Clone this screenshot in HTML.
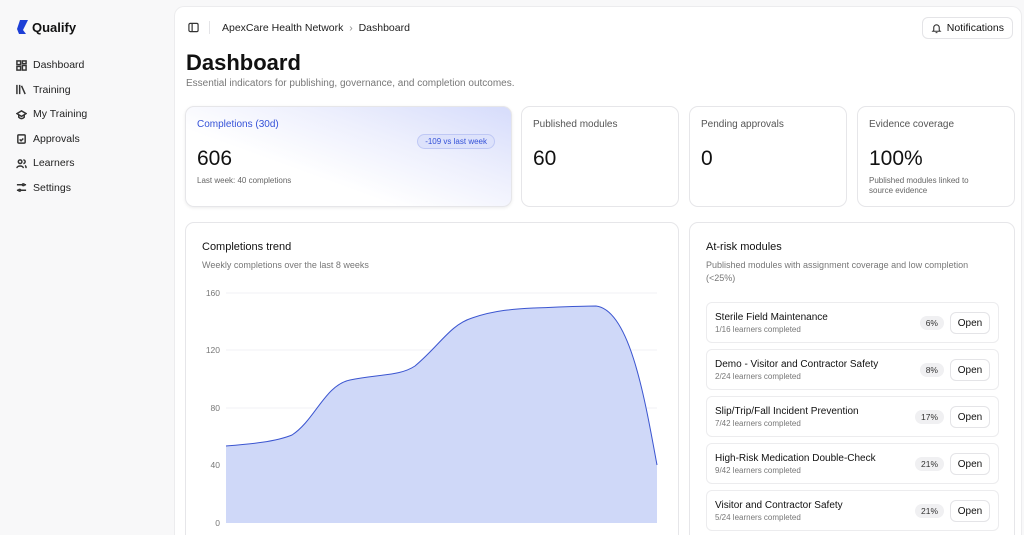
<!DOCTYPE html>
<html style="width:1024px;height:535px;overflow:hidden"><head><meta charset="utf-8"><style>
*{box-sizing:border-box;margin:0;padding:0}
body{width:1024px;height:535px;overflow:hidden;background:#f8f8f9;font-family:"Liberation Sans",sans-serif;color:#111;position:relative}
.side{position:absolute;left:0;top:0;width:174px;height:535px}
.logo{position:absolute;left:16px;top:19px;display:flex;align-items:center;font-weight:bold;font-size:13px}
.nav{position:absolute;left:16px;top:53px}
.nav div{height:24.5px;display:flex;align-items:center;font-size:10.5px;color:#222}
.nav svg{width:11px;height:11px;margin-right:6px;stroke:#333;fill:none;stroke-width:1.6}
.main{position:absolute;left:174px;top:6px;width:848px;height:529px;background:#fff;border:1px solid #ececee;border-bottom:none;border-radius:10px 10px 0 0;overflow:hidden}
.crumb{position:absolute;left:47px;top:15px;font-size:10.5px;color:#222}
.notif{position:absolute;right:8px;top:10px;height:22px;padding:0 8px;border:1px solid #e4e4e7;border-radius:6px;font-size:10.5px;display:flex;align-items:center;gap:5px}
h1{position:absolute;left:11px;top:43px;font-size:22px;font-weight:bold}
.sub{position:absolute;left:11px;top:71px;font-size:10px;color:#777}
.card{position:absolute;top:99px;height:101px;border:1px solid #e6e6e9;border-radius:9px;background:#fff;padding:12px 11px}
.card .t{font-size:10px;color:#555}
.card .v{font-size:21px;margin-top:17px}
.card .s{font-size:8px;color:#666;margin-top:5px;line-height:10px}
.box{position:absolute;top:215px;border:1px solid #e6e6e9;border-radius:9px;background:#fff;height:340px}
.row{position:absolute;left:16px;width:293px;height:41px;border:1px solid #ececee;border-radius:6px}
.row .n{position:absolute;left:8px;top:9px;font-size:10px}
.row .c{position:absolute;left:8px;top:22px;font-size:8px;color:#777}
.row .p{position:absolute;right:54px;top:13px;background:#f0f0f2;border-radius:8px;font-size:8.5px;padding:2px 6px;color:#333}
.row .o{position:absolute;right:8px;top:9px;width:40px;height:22px;border:1px solid #e4e4e7;border-radius:6px;font-size:10px;display:flex;align-items:center;justify-content:center}
</style></head><body>
<div class="side">
<div class="logo"><svg width="14" height="16" viewBox="0 0 14 16"><path d="M4 1 L12 1 L7 11 L10 15 L3 15 L1 10 Z" fill="#1d3fd6"/></svg><span style="margin-left:2px">Qualify</span></div>
<div class="nav">
<div><svg viewBox="0 0 12 12"><rect x="1" y="1" width="4" height="4"/><rect x="7" y="1" width="4" height="3"/><rect x="1" y="7" width="4" height="4"/><rect x="7" y="6" width="4" height="5"/></svg>Dashboard</div>
<div><svg viewBox="0 0 12 12"><path d="M1 1v10M4 1v10M6 2l4 9"/></svg>Training</div>
<div><svg viewBox="0 0 12 12"><path d="M1 5l5-3 5 3-5 3zM3 6v3c2 2 4 2 6 0V6"/></svg>My Training</div>
<div><svg viewBox="0 0 12 12"><rect x="2" y="2" width="8" height="9" rx="1"/><path d="M4 7l1.5 1.5L8 6"/></svg>Approvals</div>
<div><svg viewBox="0 0 12 12"><circle cx="4.5" cy="4" r="2"/><path d="M1 11c0-3 7-3 7 0M8 2a2 2 0 010 4M10 8c1 1 1 2 1 3"/></svg>Learners</div>
<div><svg viewBox="0 0 12 12"><path d="M1 3h6M9 3h2M1 9h2M5 9h6"/><circle cx="8" cy="3" r="1"/><circle cx="4" cy="9" r="1"/></svg>Settings</div>
</div></div>
<div class="main">
<svg style="position:absolute;left:13px;top:15px" width="11" height="11" viewBox="0 0 12 12" fill="none" stroke="#333" stroke-width="1.3"><rect x="1" y="1.5" width="10" height="9" rx="1.5"/><path d="M4.5 1.5v9"/></svg>
<div style="position:absolute;left:34px;top:14px;width:1px;height:13px;background:#e4e4e7"></div>
<div class="crumb">ApexCare Health Network &nbsp;<span style="color:#888">›</span>&nbsp; Dashboard</div>
<div class="notif"><svg width="11" height="11" viewBox="0 0 12 12" fill="none" stroke="#333" stroke-width="1.2"><path d="M3 8V5a3 3 0 016 0v3l1 1H2zM5 10.5h2"/></svg>Notifications</div>
<h1>Dashboard</h1>
<div class="sub">Essential indicators for publishing, governance, and completion outcomes.</div>
<div class="card" style="left:10px;width:327px;background:linear-gradient(200deg,#d6dcfb 0%,#eef0fd 35%,#fff 65%);box-shadow:0 1px 3px rgba(0,0,0,.08)"><div class="t" style="color:#3552d8">Completions (30d)</div><div style="position:absolute;right:16px;top:27px;background:#dde2fb;border:1px solid #bfc8f5;color:#3552d8;border-radius:8px;font-size:8px;padding:2px 7px">-109 vs last week</div><div class="v">606</div><div class="s">Last week: 40 completions</div></div>
<div class="card" style="left:346px;width:158px"><div class="t">Published modules</div><div class="v">60</div></div>
<div class="card" style="left:514px;width:158px"><div class="t">Pending approvals</div><div class="v">0</div></div>
<div class="card" style="left:682px;width:158px"><div class="t">Evidence coverage</div><div class="v">100%</div><div class="s">Published modules linked to<br>source evidence</div></div>
<div class="box" style="left:10px;width:494px">
<div style="position:absolute;left:16px;top:18px;font-size:11px">Completions trend</div>
<div style="position:absolute;left:16px;top:37px;font-size:9px;color:#777">Weekly completions over the last 8 weeks</div>
</div>
<div class="box" style="left:514px;width:326px">
<div style="position:absolute;left:16px;top:18px;font-size:11px">At-risk modules</div>
<div style="position:absolute;left:16px;top:36px;font-size:9px;color:#777;line-height:13px;width:290px">Published modules with assignment coverage and low completion (&lt;25%)</div>
<div class="row" style="top:79px"><div class="n">Sterile Field Maintenance</div><div class="c">1/16 learners completed</div><div class="p">6%</div><div class="o">Open</div></div>
<div class="row" style="top:126px"><div class="n">Demo - Visitor and Contractor Safety</div><div class="c">2/24 learners completed</div><div class="p">8%</div><div class="o">Open</div></div>
<div class="row" style="top:173px"><div class="n">Slip/Trip/Fall Incident Prevention</div><div class="c">7/42 learners completed</div><div class="p">17%</div><div class="o">Open</div></div>
<div class="row" style="top:220px"><div class="n">High-Risk Medication Double-Check</div><div class="c">9/42 learners completed</div><div class="p">21%</div><div class="o">Open</div></div>
<div class="row" style="top:267px"><div class="n">Visitor and Contractor Safety</div><div class="c">5/24 learners completed</div><div class="p">21%</div><div class="o">Open</div></div>
</div>
</div>
<svg style="position:absolute;left:0;top:0" width="1024" height="535">
<g stroke="#f2f2f4" stroke-width="1"><line x1="226" y1="293" x2="657" y2="293"/><line x1="226" y1="350" x2="657" y2="350"/><line x1="226" y1="408" x2="657" y2="408"/><line x1="226" y1="465" x2="657" y2="465"/></g>
<g font-family="Liberation Sans" font-size="8.5" fill="#777" text-anchor="end"><text x="220" y="296">160</text><text x="220" y="353">120</text><text x="220" y="411">80</text><text x="220" y="468">40</text><text x="220" y="526">0</text></g>
<path d="M226 446 C250 444 275 442 292 435 C315 420 325 385 350 380 C380 374 400 376 415 366 C440 345 450 325 472 318 C495 310 515 309 534 308 C560 307 580 306 596 306 C630 310 645 400 657 465 L657 523 L226 523 Z" fill="#cfd8f8"/>
<path d="M226 446 C250 444 275 442 292 435 C315 420 325 385 350 380 C380 374 400 376 415 366 C440 345 450 325 472 318 C495 310 515 309 534 308 C560 307 580 306 596 306 C630 310 645 400 657 465" fill="none" stroke="#3b55d0" stroke-width="1"/>
</svg>
</body></html>
